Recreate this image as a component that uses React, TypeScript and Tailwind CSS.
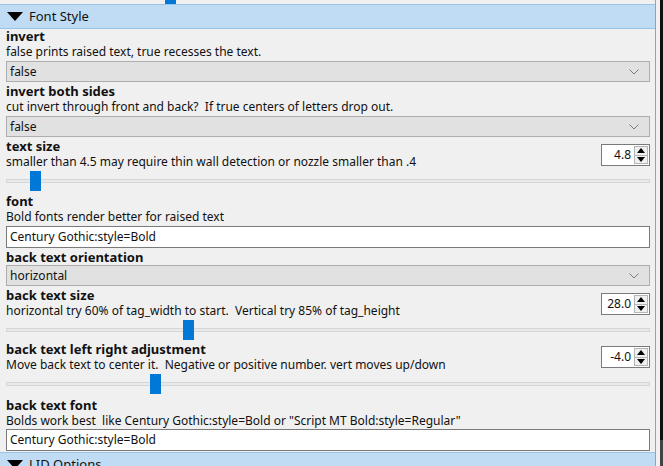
import React from "react";

const font = { fontFamily: '"Noto Sans", "Open Sans", sans-serif' };

function Header({ title }: { title: string }) {
  return (
    <div className="shrink-0 h-[25px] bg-[#bfdcf4] border-y border-[#98c4e8] flex items-center pl-[7px]">
      <svg width="16" height="9" viewBox="0 0 16 9" className="mr-[6px]">
        <polygon points="0,0 16,0 8,9" fill="#000" />
      </svg>
      <span className="text-[13px] text-[#111]">{title}</span>
    </div>
  );
}

function Label({ children }: { children: React.ReactNode }) {
  return <div className="shrink-0 h-[15px] leading-[15px] text-[13px] font-bold text-[#111] whitespace-nowrap">{children}</div>;
}
function Desc({ children }: { children: React.ReactNode }) {
  return <div className="shrink-0 h-[16px] leading-[16px] text-[12px] text-[#111] whitespace-pre">{children}</div>;
}

function Select({ value }: { value: string }) {
  return (
    <div className="shrink-0 h-[21px] bg-[#e1e1e1] border border-[#adadad] flex items-center justify-between pl-[3px] pr-[10px]">
      <span className="text-[12px] text-[#111]">{value}</span>
      <svg width="10" height="6" viewBox="0 0 10 6">
        <polyline points="0.5,0.5 5,5 9.5,0.5" fill="none" stroke="#7a7a7a" strokeWidth="1" />
      </svg>
    </div>
  );
}

function Input({ value }: { value: string }) {
  return (
    <div className="shrink-0 h-[22px] bg-white border border-[#7a7a7a] flex items-center pl-[3px]">
      <span className="text-[12px] text-[#111]">{value}</span>
    </div>
  );
}

function Spin({ value }: { value: string }) {
  return (
    <div className="w-[49px] h-[22px] bg-white border border-[#7a7a7a] flex items-stretch">
      <div className="flex-1 flex items-center justify-end pr-[3px] text-[12px] text-[#111]">{value}</div>
      <div className="w-[14px] flex flex-col my-[1px] mr-[1px] border border-[#b5b5b5] bg-[#f0f0f0]">
        <div className="flex-1 flex items-center justify-center border-b border-[#b5b5b5]">
          <svg width="8" height="5" viewBox="0 0 8 5"><polygon points="0,5 8,5 4,0" fill="#000" /></svg>
        </div>
        <div className="flex-1 flex items-center justify-center">
          <svg width="8" height="5" viewBox="0 0 8 5"><polygon points="0,0 8,0 4,5" fill="#000" /></svg>
        </div>
      </div>
    </div>
  );
}

function Slider({ pos }: { pos: number }) {
  return (
    <div className="shrink-0 h-[22px] relative flex items-center">
      <div className="h-[4px] w-full bg-[#e7eaea] border border-[#d6d6d6]" />
      <div className="absolute top-[1px] w-[11px] h-[20px] bg-[#0078d7]" style={{ left: pos }} />
    </div>
  );
}

export default function App() {
  return (
    <div className="w-[663px] h-[466px] overflow-hidden flex bg-[#f0f0f0]" style={font}>
      <div className="w-[655px] flex flex-col overflow-hidden">
        <div className="shrink-0 h-[4px] relative">
          <div className="absolute left-[165px] top-0 w-[11px] h-[4px] bg-[#0078d7]" />
        </div>
        <Header title="Font Style" />
        <div className="shrink-0 pl-[6px] pr-[5px] flex flex-col">
          <div className="shrink-0 mb-[2px]">
            <Label>invert</Label>
            <Desc>false prints raised text, true recesses the text.</Desc>
            <div className="mt-[1px]"><Select value="false" /></div>
          </div>
          <div className="shrink-0 mb-[1px]">
            <Label>invert both sides</Label>
            <Desc>cut invert through front and back?  If true centers of letters drop out.</Desc>
            <div className="mt-[1px]"><Select value="false" /></div>
          </div>
          <div className="shrink-0 mt-[1px] mb-[2px]">
            <div className="flex items-start">
              <div className="flex-1">
                <Label>text size</Label>
                <Desc>smaller than 4.5 may require thin wall detection or nozzle smaller than .4</Desc>
              </div>
              <div className="mt-[5px]"><Spin value="4.8" /></div>
            </div>
            <Slider pos={24} />
          </div>
          <div className="shrink-0 mb-[2px]">
            <Label>font</Label>
            <Desc>Bold fonts render better for raised text</Desc>
            <div className="mt-[1px]"><Input value="Century Gothic:style=Bold" /></div>
          </div>
          <div className="shrink-0 mb-[2px]">
            <Label>back text orientation</Label>
            <Select value="horizontal" />
          </div>
          <div className="shrink-0 mb-[1px]">
            <div className="flex items-start">
              <div className="flex-1">
                <Label>back text size</Label>
                <Desc>horizontal try 60% of tag_width to start.  Vertical try 85% of tag_height</Desc>
              </div>
              <div className="mt-[5px]"><Spin value="28.0" /></div>
            </div>
            <Slider pos={177} />
          </div>
          <div className="shrink-0 mb-[3px]">
            <div className="flex items-start">
              <div className="flex-1">
                <Label>back text left right adjustment</Label>
                <Desc>Move back text to center it.  Negative or positive number. vert moves up/down</Desc>
              </div>
              <div className="mt-[4px]"><Spin value="-4.0" /></div>
            </div>
            <Slider pos={144} />
          </div>
          <div className="shrink-0 mb-[1px]">
            <Label>back text font</Label>
            <Desc>Bolds work best  like Century Gothic:style=Bold or "Script MT Bold:style=Regular"</Desc>
            <Input value="Century Gothic:style=Bold" />
          </div>
        </div>
        <Header title="LID Options" />
      </div>
      <div className="w-[1px] bg-[#a0a0a0]" />
      <div className="w-[4px] bg-[#f0f0f0]" />
      <div className="w-[3px] flex flex-col">
        <div className="h-[440px] bg-[#111]" />
        <div className="flex-1 bg-[#444]" />
      </div>
    </div>
  );
}
